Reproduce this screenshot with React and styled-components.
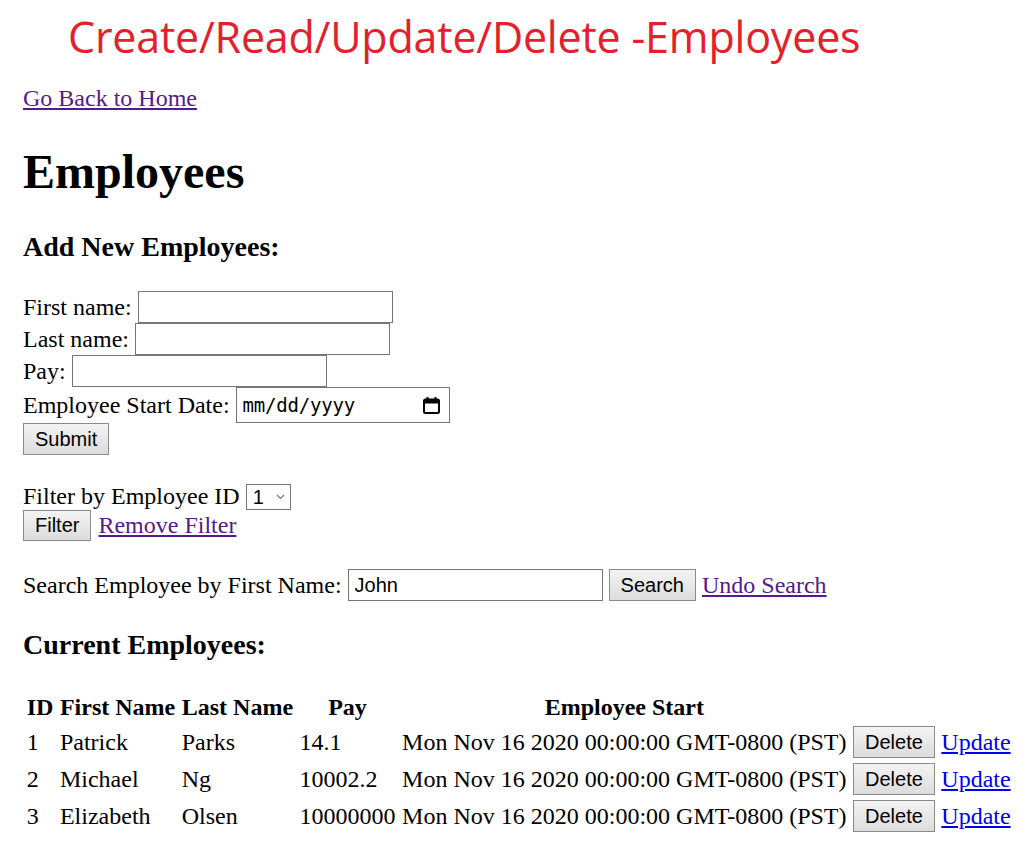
import styled, { createGlobalStyle } from "styled-components";

const GlobalStyle = createGlobalStyle`
  body {
    margin: 0;
    background: #fff;
    color: #000;
    font-family: "Liberation Serif", "Times New Roman", serif;
    font-size: 24px;
  }
`;

const Page = styled.div`
  padding: 0 0 0 23px;
`;

const Banner = styled.div`
  font-family: "Open Sans", "Noto Sans", sans-serif;
  font-size: 43px;
  line-height: 43px;
  color: #e3202b;
  padding: 15px 0 0 45px;
  letter-spacing: -0.2px;
`;

const HomeLink = styled.a`
  display: inline-block;
  margin-top: 27px;
  line-height: 27px;
  color: #551a8b;
  text-decoration: underline;
`;

const Title = styled.h1`
  font-size: 48px;
  line-height: 55px;
  margin: 32px 0 0;
`;

const Subtitle = styled.h3`
  font-size: 28px;
  line-height: 32px;
  margin: ${(p) => p.$top}px 0 0;
`;

const Form = styled.form`
  margin-top: 28px;
  display: flex;
  flex-direction: column;
  align-items: flex-start;
`;

const Row = styled.div`
  display: flex;
  align-items: center;
  gap: ${(p) => p.$gap ?? 6}px;
  line-height: 27px;
  margin-top: ${(p) => p.$top ?? 0}px;
`;

const TextInput = styled.input`
  box-sizing: border-box;
  width: 255px;
  height: 32px;
  border: 1px solid #767676;
  padding: 1px 6px;
  font-family: "Liberation Sans", Arial, sans-serif;
  font-size: 20px;
  color: #000;
  background: #fff;
  outline: none;
`;

const DateBox = styled.div`
  box-sizing: border-box;
  width: 214px;
  height: 36px;
  border: 1px solid #767676;
  display: flex;
  align-items: center;
  justify-content: space-between;
  padding: 0 8px 0 6px;
  font-family: "DejaVu Sans Mono", "Liberation Mono", monospace;
  font-size: 19px;
  letter-spacing: -0.2px;
`;

const Button = styled.button`
  box-sizing: border-box;
  height: ${(p) => p.$h ?? 32}px;
  padding: 0 11px;
  border: 1px solid #8a8a8a;
  border-radius: 0;
  background: linear-gradient(#f3f3f3, #dcdcdc);
  font-family: "Liberation Sans", Arial, sans-serif;
  font-size: 20px;
  color: #000;
  cursor: pointer;
`;

const TextLink = styled.a`
  color: ${(p) => (p.$visited ? "#551a8b" : "#0000ee")};
  text-decoration: underline;
  cursor: pointer;
`;

const SelectBox = styled.div`
  box-sizing: border-box;
  width: 45px;
  height: 26px;
  border: 1px solid #767676;
  display: flex;
  align-items: center;
  justify-content: space-between;
  padding: 0 5px 0 6px;
`;

const Select = styled.select`
  appearance: none;
  border: none;
  background: transparent;
  padding: 0;
  font-family: "Liberation Sans", Arial, sans-serif;
  font-size: 20px;
  color: #000;
  outline: none;
`;

const Table = styled.table`
  margin-top: 29px;
  margin-left: -1px;
  border-spacing: 3px;
`;

const Th = styled.th`
  padding: 1px 1.75px;
  line-height: 27px;
`;

const Td = styled.td`
  padding: 1px 1.75px;
  line-height: 27px;
  white-space: nowrap;
`;

const CalendarIcon = () => (
  <svg width="19" height="19" viewBox="0 0 19 19">
    <rect x="2" y="3.5" width="15" height="13.5" rx="1.5" fill="none" stroke="#000" strokeWidth="2" />
    <rect x="2" y="3.5" width="15" height="4" fill="#000" />
    <rect x="4.5" y="1" width="2" height="3" fill="#000" />
    <rect x="12.5" y="1" width="2" height="3" fill="#000" />
  </svg>
);

const Chevron = () => (
  <svg width="9" height="6" viewBox="0 0 9 6">
    <path d="M1 1 L4.5 4.5 L8 1" fill="none" stroke="#777" strokeWidth="1.2" />
  </svg>
);

const employees = [
  { id: 1, first: "Patrick", last: "Parks", pay: "14.1" },
  { id: 2, first: "Michael", last: "Ng", pay: "10002.2" },
  { id: 3, first: "Elizabeth", last: "Olsen", pay: "10000000" },
];

const App = () => {
  return (
    <Page>
      <GlobalStyle />
      <Banner>Create/Read/Update/Delete -Employees</Banner>
      <HomeLink href="#">Go Back to Home</HomeLink>
      <Title>Employees</Title>
      <Subtitle $top={32}>Add New Employees:</Subtitle>
      <Form onSubmit={(e) => e.preventDefault()}>
        <Row>
          First name: <TextInput type="text" />
        </Row>
        <Row>
          Last name: <TextInput type="text" />
        </Row>
        <Row>
          Pay: <TextInput type="text" />
        </Row>
        <Row>
          Employee Start Date:
          <DateBox>
            <span>mm/dd/yyyy</span>
            <CalendarIcon />
          </DateBox>
        </Row>
        <Button type="submit">Submit</Button>
      </Form>
      <Row $top={28}>
        Filter by Employee ID
        <SelectBox>
          <Select defaultValue="1">
            <option value="1">1</option>
            <option value="2">2</option>
            <option value="3">3</option>
          </Select>
          <Chevron />
        </SelectBox>
      </Row>
      <Row $gap={7}>
        <Button $h={31}>Filter</Button>
        <TextLink $visited href="#">Remove Filter</TextLink>
      </Row>
      <Row $top={28}>
        Search Employee by First Name:
        <TextInput type="text" defaultValue="John" />
        <Button>Search</Button>
        <TextLink $visited href="#">Undo Search</TextLink>
      </Row>
      <Subtitle $top={28}>Current Employees:</Subtitle>
      <Table>
        <thead>
          <tr>
            <Th>ID</Th>
            <Th>First Name</Th>
            <Th>Last Name</Th>
            <Th>Pay</Th>
            <Th>Employee Start</Th>
            <Th />
            <Th />
          </tr>
        </thead>
        <tbody>
          {employees.map((e) => (
            <tr key={e.id}>
              <Td>{e.id}</Td>
              <Td>{e.first}</Td>
              <Td>{e.last}</Td>
              <Td>{e.pay}</Td>
              <Td>Mon Nov 16 2020 00:00:00 GMT-0800 (PST)</Td>
              <Td>
                <Button>Delete</Button>
              </Td>
              <Td>
                <TextLink href="#">Update</TextLink>
              </Td>
            </tr>
          ))}
        </tbody>
      </Table>
    </Page>
  );
};

export default App;
